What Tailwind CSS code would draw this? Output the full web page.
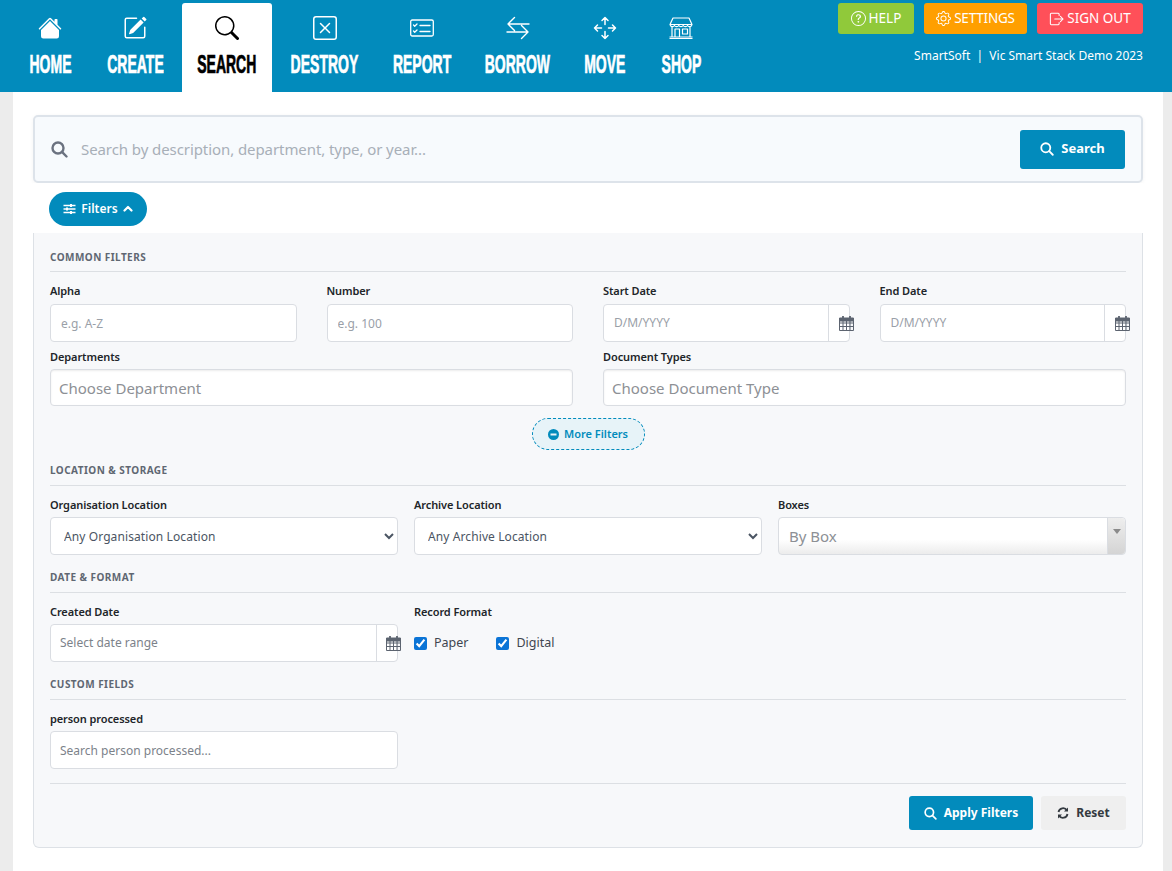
<!DOCTYPE html>
<html lang="en">
<head>
<meta charset="utf-8">
<title>Search</title>
<script src="https://cdn.jsdelivr.net/npm/@tailwindcss/browser@4"></script>
</head>
<body class="bg-[#ececec] font-['Noto_Sans',sans-serif] text-[#212529] overflow-hidden h-[871px]">
<header class="h-[92px] bg-[#028bbc] flex justify-between relative">
  <nav class="flex pl-[13px] items-end h-[92px] font-['Liberation_Sans',sans-serif] font-bold text-[25px] leading-none text-white">
    <a class="w-[74px] h-[92px] mr-[5px] flex flex-col items-center pt-[16px]">
      <svg class="w-[24px] h-[24px]" viewBox="0 0 16 16" fill="currentColor"><path d="M8.707 1.5a1 1 0 0 0-1.414 0L.646 8.146a.5.5 0 0 0 .708.708L8 2.207l6.646 6.647a.5.5 0 0 0 .708-.708L13 5.793V2.5a.5.5 0 0 0-.5-.5h-1a.5.5 0 0 0-.5.5v1.293z"/><path d="m8 3.293 6 6V13.5a1.5 1.5 0 0 1-1.5 1.5h-9A1.5 1.5 0 0 1 2 13.5V9.293z"/></svg>
      <span class="mt-[12px] inline-block scale-x-[.56] [-webkit-text-stroke:0.7px_white]">HOME</span>
    </a>
    <a class="w-[86px] h-[92px] mr-[4px] flex flex-col items-center pt-[16px]">
      <svg class="w-[24px] h-[24px]" viewBox="0 0 16 16" fill="currentColor"><path d="M15.502 1.94a.5.5 0 0 1 0 .706L14.459 3.69l-2-2L13.502.646a.5.5 0 0 1 .707 0l1.293 1.293zm-1.75 2.456-2-2L4.939 9.21a.5.5 0 0 0-.121.196l-.805 2.414a.25.25 0 0 0 .316.316l2.414-.805a.5.5 0 0 0 .196-.12l6.813-6.814z"/><path d="M1 13.5A1.5 1.5 0 0 0 2.5 15h11a1.5 1.5 0 0 0 1.5-1.5v-6a.5.5 0 0 0-1 0v6a.5.5 0 0 1-.5.5h-11a.5.5 0 0 1-.5-.5v-11a.5.5 0 0 1 .5-.5H9a.5.5 0 0 0 0-1H2.5A1.5 1.5 0 0 0 1 2.5z"/></svg>
      <span class="mt-[12px] inline-block scale-x-[.56] [-webkit-text-stroke:0.7px_white]">CREATE</span>
    </a>
    <a class="w-[90px] h-[89px] mr-[4px] flex flex-col items-center pt-[13px] bg-white text-black rounded-t-[3px]">
      <svg class="w-[24px] h-[24px]" viewBox="0 0 16 16" fill="currentColor"><path d="M11.742 10.344a6.5 6.5 0 1 0-1.397 1.398h-.001q.044.06.098.115l3.85 3.85a1 1 0 0 0 1.415-1.414l-3.85-3.85a1 1 0 0 0-.115-.1zM12 6.5a5.5 5.5 0 1 1-11 0 5.5 5.5 0 0 1 11 0"/></svg>
      <span class="mt-[12px] inline-block scale-x-[.56] [-webkit-text-stroke:0.7px_black]">SEARCH</span>
    </a>
    <a class="w-[97px] h-[92px] mr-[5px] flex flex-col items-center pt-[16px]">
      <svg class="w-[24px] h-[24px]" viewBox="0 0 16 16" fill="currentColor"><path d="M14 1a1 1 0 0 1 1 1v12a1 1 0 0 1-1 1H2a1 1 0 0 1-1-1V2a1 1 0 0 1 1-1zM2 0a2 2 0 0 0-2 2v12a2 2 0 0 0 2 2h12a2 2 0 0 0 2-2V2a2 2 0 0 0-2-2z"/><path d="M4.646 4.646a.5.5 0 0 1 .708 0L8 7.293l2.646-2.647a.5.5 0 0 1 .708.708L8.707 8l2.647 2.646a.5.5 0 0 1-.708.708L8 8.707l-2.646 2.647a.5.5 0 0 1-.708-.708L7.293 8 4.646 5.354a.5.5 0 0 1 0-.708"/></svg>
      <span class="mt-[12px] inline-block scale-x-[.56] [-webkit-text-stroke:0.7px_white]">DESTROY</span>
    </a>
    <a class="w-[88px] h-[92px] mr-[5px] flex flex-col items-center pt-[16px]">
      <svg class="w-[24px] h-[24px]" viewBox="0 0 24 24" fill="none" stroke="currentColor" stroke-width="1.3"><rect x="0.7" y="4" width="22.6" height="16" rx="1.5"/><path d="M3.5 9l1.2 1.2L7 8M3.5 15l1.2 1.2L7 14M10 9.5h10M10 15.5h10" stroke-linecap="round" stroke-linejoin="round"/></svg>
      <span class="mt-[12px] inline-block scale-x-[.56] [-webkit-text-stroke:0.7px_white]">REPORT</span>
    </a>
    <a class="w-[93px] h-[92px] mr-[5px] flex flex-col items-center pt-[16px]">
      <svg class="w-[24px] h-[24px]" viewBox="0 0 24 24" fill="none" stroke="currentColor" stroke-width="1.4" stroke-linecap="round" stroke-linejoin="round"><path d="M23 8H2M8.500 1.500 2 8l6.500 6.500M1 16h21M15.500 9.500 22 16l-6.500 6.500"/></svg>
      <span class="mt-[12px] inline-block scale-x-[.56] [-webkit-text-stroke:0.7px_white]">BORROW</span>
    </a>
    <a class="w-[72px] h-[92px] mr-[5px] flex flex-col items-center pt-[16px]">
      <svg class="w-[24px] h-[24px]" viewBox="0 0 24 24" fill="none" stroke="currentColor" stroke-width="1.5" stroke-linecap="round" stroke-linejoin="round"><path d="M12 1.500v7M12 15.500v7M1.500 12h7M15.500 12h7M9 4.500 12 1.500l3 3M9 19.500l3 3 3-3M4.500 9l-3 3 3 3M19.500 9l3 3-3 3"/></svg>
      <span class="mt-[12px] inline-block scale-x-[.56] [-webkit-text-stroke:0.7px_white]">MOVE</span>
    </a>
    <a class="w-[70px] h-[92px] flex flex-col items-center pt-[16px]">
      <svg class="w-[24px] h-[24px]" viewBox="0 0 24 24" fill="none" stroke="currentColor" stroke-width="1.2" stroke-linejoin="round"><path d="M4 2h16l3 6.500a2.400 2.400 0 0 1-4.400 1 2.600 2.600 0 0 1-4.400 0 2.600 2.600 0 0 1-4.400 0 2.600 2.600 0 0 1-4.400 0A2.400 2.400 0 0 1 1 8.500zM1 8.500h22M3 11v10M21 11v10M0.500 22.500h23M0.500 21h23M6 21v-8h4.500v8M13.500 13h5v5h-5z"/></svg>
      <span class="mt-[12px] inline-block scale-x-[.56] [-webkit-text-stroke:0.7px_white]">SHOP</span>
    </a>
  </nav>
  <div class="absolute top-[3px] right-[29px] flex flex-col items-end">
    <div class="flex gap-[10px] text-[13.5px] text-white h-[31px]">
      <a class="w-[76px] rounded-[3px] bg-[#90c93a] flex items-center justify-center gap-[3px]">
        <svg class="w-[15px] h-[15px]" viewBox="0 0 16 16" fill="currentColor"><path d="M8 15A7 7 0 1 1 8 1a7 7 0 0 1 0 14m0 1A8 8 0 1 0 8 0a8 8 0 0 0 0 16"/><path d="M5.255 5.786a.237.237 0 0 0 .241.247h.825c.138 0 .248-.113.266-.25.09-.656.54-1.134 1.342-1.134.686 0 1.314.343 1.314 1.168 0 .635-.374.927-.965 1.371-.673.489-1.206 1.06-1.168 1.987l.003.217a.25.25 0 0 0 .25.246h.811a.25.25 0 0 0 .25-.25v-.105c0-.718.273-.927 1.01-1.486.609-.463 1.244-.977 1.244-2.056 0-1.511-1.276-2.241-2.673-2.241-1.267 0-2.655.59-2.75 2.286m1.557 5.763c0 .533.425.927 1.01.927.609 0 1.028-.394 1.028-.927 0-.552-.42-.94-1.029-.94-.584 0-1.009.388-1.009.94"/></svg>HELP</a>
      <a class="w-[103px] rounded-[3px] bg-[#ff9f00] flex items-center justify-center gap-[3px]">
        <svg class="w-[15px] h-[15px]" viewBox="0 0 16 16" fill="currentColor"><path d="M8 4.754a3.246 3.246 0 1 0 0 6.492 3.246 3.246 0 0 0 0-6.492M5.754 8a2.246 2.246 0 1 1 4.492 0 2.246 2.246 0 0 1-4.492 0"/><path d="M9.796 1.343c-.527-1.79-3.065-1.79-3.592 0l-.094.319a.873.873 0 0 1-1.255.52l-.292-.16c-1.64-.892-3.433.902-2.54 2.541l.159.292a.873.873 0 0 1-.52 1.255l-.319.094c-1.79.527-1.79 3.065 0 3.592l.319.094a.873.873 0 0 1 .52 1.255l-.16.292c-.892 1.64.901 3.434 2.541 2.54l.292-.159a.873.873 0 0 1 1.255.52l.094.319c.527 1.79 3.065 1.79 3.592 0l.094-.319a.873.873 0 0 1 1.255-.52l.292.16c1.64.893 3.434-.902 2.54-2.541l-.159-.292a.873.873 0 0 1 .52-1.255l.319-.094c1.79-.527 1.79-3.065 0-3.592l-.319-.094a.873.873 0 0 1-.52-1.255l.16-.292c.893-1.64-.902-3.433-2.541-2.54l-.292.159a.873.873 0 0 1-1.255-.52zm-2.633.283c.246-.835 1.428-.835 1.674 0l.094.319a1.873 1.873 0 0 0 2.693 1.115l.291-.16c.764-.415 1.6.42 1.184 1.185l-.159.292a1.873 1.873 0 0 0 1.116 2.692l.318.094c.835.246.835 1.428 0 1.674l-.319.094a1.873 1.873 0 0 0-1.115 2.693l.16.291c.415.764-.42 1.6-1.185 1.184l-.291-.159a1.873 1.873 0 0 0-2.693 1.116l-.094.318c-.246.835-1.428.835-1.674 0l-.094-.319a1.873 1.873 0 0 0-2.692-1.115l-.292.16c-.764.415-1.6-.42-1.184-1.185l.159-.291A1.873 1.873 0 0 0 1.945 8.93l-.319-.094c-.835-.246-.835-1.428 0-1.674l.319-.094A1.873 1.873 0 0 0 3.06 4.377l-.16-.292c-.415-.764.42-1.6 1.185-1.184l.292.159a1.873 1.873 0 0 0 2.692-1.115z"/></svg><span class="tracking-[-0.2px]">SETTINGS</span></a>
      <a class="w-[106px] rounded-[3px] bg-[#ff5059] flex items-center justify-center gap-[3px]">
        <svg class="w-[15px] h-[14px]" viewBox="0 0 16 16" fill="none" stroke="currentColor" stroke-width="1.2" stroke-linecap="round" stroke-linejoin="round"><path d="M11 4V2.500A1 1 0 0 0 10 1.500H2A1 1 0 0 0 1 2.500v11a1 1 0 0 0 1 1h8a1 1 0 0 0 1-1V12M6 8h9.500M12.500 5l3 3-3 3"/></svg>SIGN OUT</a>
    </div>
    <p class="mt-[13px] text-[12px] leading-[18px] text-white whitespace-pre">SmartSoft  |  Vic Smart Stack Demo 2023</p>
  </div>
</header>

<main class="ml-[13px] mr-[9px] h-[779px] bg-white px-[20px] pt-[23px]">
  <div class="h-[68px] rounded-[5px] border-2 border-[#dde3ea] bg-[#f7fafd] flex items-center pl-[16px] pr-[16px] shadow-[0_1px_4px_rgba(0,0,0,0.05)]">
    <svg class="w-[17px] h-[17px] text-[#6b7280] shrink-0" viewBox="0 0 17 17" fill="none" stroke="currentColor" stroke-width="2.4" stroke-linecap="round"><circle cx="7" cy="7" r="5.500"/><path d="M11.200 11.200 15.500 15.500"/></svg>
    <input class="flex-1 ml-[13px] bg-transparent outline-none text-[15px] tracking-[-0.08px] placeholder:text-[#a8afb8]" placeholder="Search by description, department, type, or year...">
    <button class="w-[105px] h-[39px] rounded-[3px] bg-[#028bbc] text-white text-[13px] font-bold flex items-center justify-center gap-[7px]">
      <svg class="w-[14px] h-[14px]" viewBox="0 0 17 17" fill="none" stroke="currentColor" stroke-width="2.2" stroke-linecap="round"><circle cx="7" cy="7" r="5.500"/><path d="M11.200 11.200 15.500 15.500"/></svg>Search</button>
  </div>
  <div class="h-[50px] bg-white flex items-center pl-[16px] pt-[2px]">
    <button class="w-[98px] h-[34px] rounded-full bg-[#028bbc] text-white text-[12px] font-semibold flex items-center justify-center gap-[5px]">
      <svg class="w-[13px] h-[12px]" viewBox="0 0 13 12" fill="none" stroke="currentColor" stroke-width="1.300"><path d="M0.500 2.500h12M0.500 6h12M0.500 9.500h12"/><path d="M8 1v3M4 4.500v3M8 8v3" stroke-width="2"/></svg>Filters
      <svg class="w-[10px] h-[8px]" viewBox="0 0 10 8" fill="none" stroke="currentColor" stroke-width="2.200" stroke-linecap="round" stroke-linejoin="round"><path d="M1.500 5.500 5 2l3.500 3.500"/></svg></button>
  </div>
  <section class="h-[615px] bg-[#f7f8fa] border border-t-0 border-[#dde1e6] rounded-b-[6px] px-[16px] pt-[17px]">
    <h2 class="text-[10px] leading-[14px] font-bold tracking-[0.45px] text-[#5f6772] pb-[7px] border-b border-[#dcdfe3]">COMMON FILTERS</h2>
    <div class="grid grid-cols-4 gap-x-[30px] mt-[11px]">
      <label class="block"><span class="block text-[11px] tracking-[-0.1px] leading-[15px] font-semibold mb-[6px]">Alpha</span>
        <input class="w-full h-[38px] rounded-[4px] border border-[#dadde2] bg-white px-[10px] text-[12px] outline-none placeholder:text-[#9aa0a8]" placeholder="e.g. A-Z"></label>
      <label class="block"><span class="block text-[11px] tracking-[-0.1px] leading-[15px] font-semibold mb-[6px]">Number</span>
        <input class="w-full h-[38px] rounded-[4px] border border-[#dadde2] bg-white px-[10px] text-[12px] outline-none placeholder:text-[#9aa0a8]" placeholder="e.g. 100"></label>
      <label class="block"><span class="block text-[11px] tracking-[-0.1px] leading-[15px] font-semibold mb-[6px]">Start Date</span>
        <span class="flex h-[38px] rounded-[4px] border border-[#dadde2] bg-white"><input class="flex-1 min-w-0 px-[10px] text-[12px] outline-none rounded-l-[4px] placeholder:text-[#9aa0a8]" placeholder="D/M/YYYY"><span class="w-[21px] border-l border-[#dadde2] relative"><svg class="absolute left-[10px] top-[10px] w-[15px] h-[16px] text-[#5d6470]" viewBox="0 0 15 16" fill="none" stroke="currentColor"><path d="M0.500 4.500h14v11h-14zM0.500 8h14M0.500 11.500h14M4 4.500v11M7.500 4.500v11M11 4.500v11"/><path d="M4 1v3.500M11 1v3.500" stroke-width="1.800"/><path d="M0.500 3h14v3h-14z" fill="currentColor"/></svg></span></span></label>
      <label class="block"><span class="block text-[11px] tracking-[-0.1px] leading-[15px] font-semibold mb-[6px]">End Date</span>
        <span class="flex h-[38px] rounded-[4px] border border-[#dadde2] bg-white"><input class="flex-1 min-w-0 px-[10px] text-[12px] outline-none rounded-l-[4px] placeholder:text-[#9aa0a8]" placeholder="D/M/YYYY"><span class="w-[21px] border-l border-[#dadde2] relative"><svg class="absolute left-[10px] top-[10px] w-[15px] h-[16px] text-[#5d6470]" viewBox="0 0 15 16" fill="none" stroke="currentColor"><path d="M0.500 4.500h14v11h-14zM0.500 8h14M0.500 11.500h14M4 4.500v11M7.500 4.500v11M11 4.500v11"/><path d="M4 1v3.500M11 1v3.500" stroke-width="1.800"/><path d="M0.500 3h14v3h-14z" fill="currentColor"/></svg></span></span></label>
    </div>
    <div class="grid grid-cols-2 gap-x-[30px] mt-[7px]">
      <label class="block"><span class="block text-[11px] tracking-[-0.1px] leading-[15px] font-semibold mb-[5px]">Departments</span>
        <input class="w-full h-[37px] rounded-[4px] border border-[#dadde2] bg-white px-[8px] text-[15px] outline-none shadow-[inset_0_1px_2px_rgba(0,0,0,0.08)] placeholder:text-[#8d9095]" placeholder="Choose Department"></label>
      <label class="block"><span class="block text-[11px] tracking-[-0.1px] leading-[15px] font-semibold mb-[5px]">Document Types</span>
        <input class="w-full h-[37px] rounded-[4px] border border-[#dadde2] bg-white px-[8px] text-[15px] outline-none shadow-[inset_0_1px_2px_rgba(0,0,0,0.08)] placeholder:text-[#8d9095]" placeholder="Choose Document Type"></label>
    </div>
    <div class="flex justify-center mt-[12px]">
      <button class="w-[113px] h-[32px] rounded-full border border-dashed border-[#028bbc] bg-[#e7f3f8] text-[#028bbc] text-[11px] font-semibold flex items-center justify-center gap-[5px]">
        <svg class="w-[11px] h-[11px]" viewBox="0 0 11 11"><circle cx="5.500" cy="5.500" r="5.500" fill="currentColor"/><rect x="2.500" y="4.500" width="6" height="2" fill="#e7f3f8"/></svg>More Filters</button>
    </div>
    <h2 class="mt-[13px] text-[10px] leading-[14px] font-bold tracking-[0.45px] text-[#5f6772] pb-[8px] border-b border-[#dcdfe3]">LOCATION &amp; STORAGE</h2>
    <div class="grid grid-cols-3 gap-x-[16px] mt-[11px]">
      <label class="block"><span class="block text-[11px] tracking-[-0.1px] leading-[15px] font-semibold mb-[5px]">Organisation Location</span>
        <select class="w-full h-[38px] rounded-[4px] border border-[#dadde2] bg-white pl-[9px] pr-[6px] text-[12px] tracking-[0.1px] text-[#4b5563] outline-none"><option>Any Organisation Location</option></select></label>
      <label class="block"><span class="block text-[11px] tracking-[-0.1px] leading-[15px] font-semibold mb-[5px]">Archive Location</span>
        <select class="w-full h-[38px] rounded-[4px] border border-[#dadde2] bg-white pl-[9px] pr-[6px] text-[12px] tracking-[0.1px] text-[#4b5563] outline-none"><option>Any Archive Location</option></select></label>
      <div><span class="block text-[11px] tracking-[-0.1px] leading-[15px] font-semibold mb-[5px]">Boxes</span>
        <div class="h-[38px] rounded-[4px] border border-[#dadde2] bg-linear-to-b from-white from-60% to-[#ececec] flex items-center pl-[10px] text-[15px] text-[#8d9095]"><span class="flex-1">By Box</span><span class="w-[18px] h-full border-l border-[#dadde2] bg-linear-to-b from-[#eeeeee] to-[#d4d4d4] rounded-r-[4px] flex justify-center pt-[11px]"><span class="w-0 h-0 border-x-[4px] border-x-transparent border-t-[5px] border-t-[#8a8a8a]"></span></span></div></div>
    </div>
    <h2 class="mt-[15px] text-[10px] leading-[14px] font-bold tracking-[0.45px] text-[#5f6772] pb-[8px] border-b border-[#dcdfe3]">DATE &amp; FORMAT</h2>
    <div class="grid grid-cols-3 gap-x-[16px] mt-[11px]">
      <label class="block"><span class="block text-[11px] tracking-[-0.1px] leading-[15px] font-semibold mb-[5px]">Created Date</span>
        <span class="flex h-[38px] rounded-[4px] border border-[#dadde2] bg-white"><input class="flex-1 min-w-0 px-[9px] text-[12px] outline-none rounded-l-[4px] placeholder:text-[#7c828a]" placeholder="Select date range"><span class="w-[21px] border-l border-[#dadde2] relative"><svg class="absolute left-[9px] top-[10px] w-[15px] h-[16px] text-[#5d6470]" viewBox="0 0 15 16" fill="none" stroke="currentColor"><path d="M0.500 4.500h14v11h-14zM0.500 8h14M0.500 11.500h14M4 4.500v11M7.500 4.500v11M11 4.500v11"/><path d="M4 1v3.500M11 1v3.500" stroke-width="1.800"/><path d="M0.500 3h14v3h-14z" fill="currentColor"/></svg></span></span></label>
      <div><span class="block text-[11px] tracking-[-0.1px] leading-[15px] font-semibold mb-[5px]">Record Format</span>
        <div class="flex h-[38px] items-center gap-[28px] text-[12.5px] text-[#3f4650]">
          <label class="flex items-center gap-[7px]"><input type="checkbox" checked class="w-[13px] h-[13px] accent-[#0b74d6]">Paper</label>
          <label class="flex items-center gap-[7px]"><input type="checkbox" checked class="w-[13px] h-[13px] accent-[#0b74d6]">Digital</label>
        </div></div>
    </div>
    <h2 class="mt-[15px] text-[10px] leading-[14px] font-bold tracking-[0.45px] text-[#5f6772] pb-[8px] border-b border-[#dcdfe3]">CUSTOM FIELDS</h2>
    <div class="grid grid-cols-3 gap-x-[16px] mt-[11px]">
      <label class="block"><span class="block text-[11px] tracking-[-0.1px] leading-[15px] font-semibold mb-[5px]">person processed</span>
        <input class="w-full h-[38px] rounded-[4px] border border-[#dadde2] bg-white px-[9px] text-[12px] outline-none placeholder:text-[#7c828a]" placeholder="Search person processed..."></label>
    </div>
    <div class="mt-[14px] border-t border-[#dcdfe3] pt-[12px] flex justify-end gap-[8px]">
      <button class="w-[124px] h-[34px] rounded-[3px] bg-[#028bbc] text-white text-[12px] font-bold flex items-center justify-center gap-[7px]">
        <svg class="w-[13px] h-[13px]" viewBox="0 0 17 17" fill="none" stroke="currentColor" stroke-width="2.200" stroke-linecap="round"><circle cx="7" cy="7" r="5.500"/><path d="M11.200 11.200 15.500 15.500"/></svg>Apply Filters</button>
      <button class="w-[85px] h-[34px] rounded-[3px] bg-[#efefef] text-[#343a40] text-[12px] font-bold flex items-center justify-center gap-[7px]">
        <svg class="w-[12px] h-[12px]" viewBox="0 0 12 12" fill="none" stroke="currentColor" stroke-width="1.800"><path d="M1.500 5A4.600 4.600 0 0 1 10 3.500M10.500 7A4.600 4.600 0 0 1 2 8.500"/><path d="M11 .500v4H7zM1 11.500v-4h4z" fill="currentColor" stroke="none"/></svg>Reset</button>
    </div>
  </section>
</main>
</body>
</html>
